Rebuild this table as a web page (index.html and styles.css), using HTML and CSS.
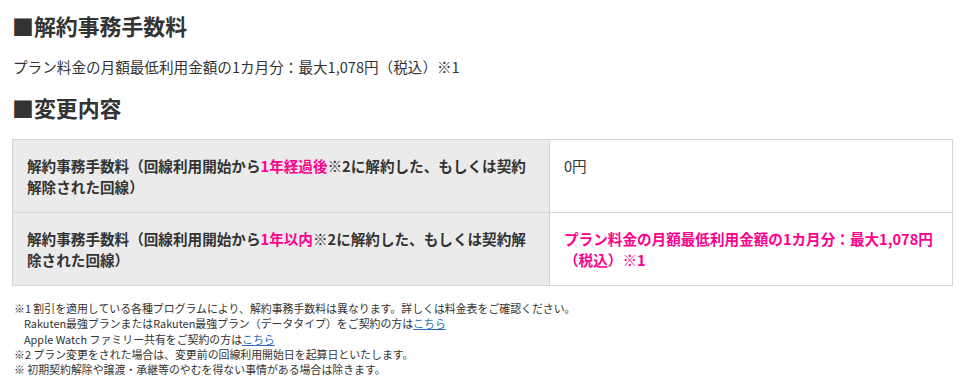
FILE: index.html
```html
<!DOCTYPE html>
<html lang="ja">
<head>
<meta charset="utf-8">
<link rel="stylesheet" href="styles.css">
</head>
<body>
<div class="page">
  <h2 class="heading">■解約事務手数料</h2>
  <p class="lead">プラン料金の月額最低利用金額の1カ月分：最大1,078円（税込）※1</p>
  <h2 class="heading">■変更内容</h2>
  <table class="fee-table">
    <tr>
      <th class="label">解約事務手数料（回線利用開始から<span class="pink">1年経過後</span>※2に解約した、もしくは契約解除された回線）</th>
      <td class="value">0円</td>
    </tr>
    <tr>
      <th class="label">解約事務手数料（回線利用開始から<span class="pink">1年以内</span>※2に解約した、もしくは契約解除された回線）</th>
      <td class="value value-pink">プラン料金の月額最低利用金額の1カ月分：最大1,078円（税込）※1</td>
    </tr>
  </table>
  <div class="notes">
    <p class="note">※1 割引を適用している各種プログラムにより、解約事務手数料は異なります。詳しくは料金表をご確認ください。</p>
    <p class="note indent">Rakuten最強プランまたはRakuten最強プラン（データタイプ）をご契約の方は<a href="#" class="link">こちら</a></p>
    <p class="note indent">Apple Watch ファミリー共有をご契約の方は<a href="#" class="link">こちら</a></p>
    <p class="note">※2 プラン変更をされた場合は、変更前の回線利用開始日を起算日といたします。</p>
    <p class="note">※ 初期契約解除や譲渡・承継等のやむを得ない事情がある場合は除きます。</p>
  </div>
</div>
</body>
</html>
```

FILE: styles.css
```css
html, body {
  margin: 0;
  padding: 0;
  background: #ffffff;
}

body {
  font-family: "Noto Sans CJK JP", "Noto Sans", sans-serif;
  color: #333333;
  font-size: 14.6px;
  line-height: 1.5;
}

.page {
  padding: 10px 7px 0 12px;
}

.heading {
  margin: 0;
  font-size: 21.9px;
  line-height: 1.48;
  font-weight: 700;
  color: #333333;
}

.lead {
  margin: 14px 0 14px 1px;
  font-size: 14.6px;
  line-height: 1.5;
}

.fee-table {
  width: 941px;
  margin-top: 14px;
  border-collapse: collapse;
  border: 1px solid #d4d4d4;
}

.fee-table th,
.fee-table td {
  border: 1px solid #d4d4d4;
  padding: 15px 14px 14px;
  text-align: left;
  vertical-align: top;
  font-size: 14.6px;
  line-height: 1.48;
}

.label {
  width: 508px;
  background: #ebebeb;
  font-weight: 700;
  color: #333333;
}

.value {
  font-weight: 400;
  background: #ffffff;
}

.value-pink {
  color: #ff008c;
  font-weight: 700;
}

.pink {
  color: #ff008c;
}

.notes {
  margin-top: 15px;
  padding-left: 2px;
}

.note {
  margin: 0;
  font-size: 10.9px;
  line-height: 1.4;
  color: #333333;
}

.indent {
  padding-left: 10px;
}

.link {
  color: #2a6ebb;
  text-decoration: underline;
}
```
